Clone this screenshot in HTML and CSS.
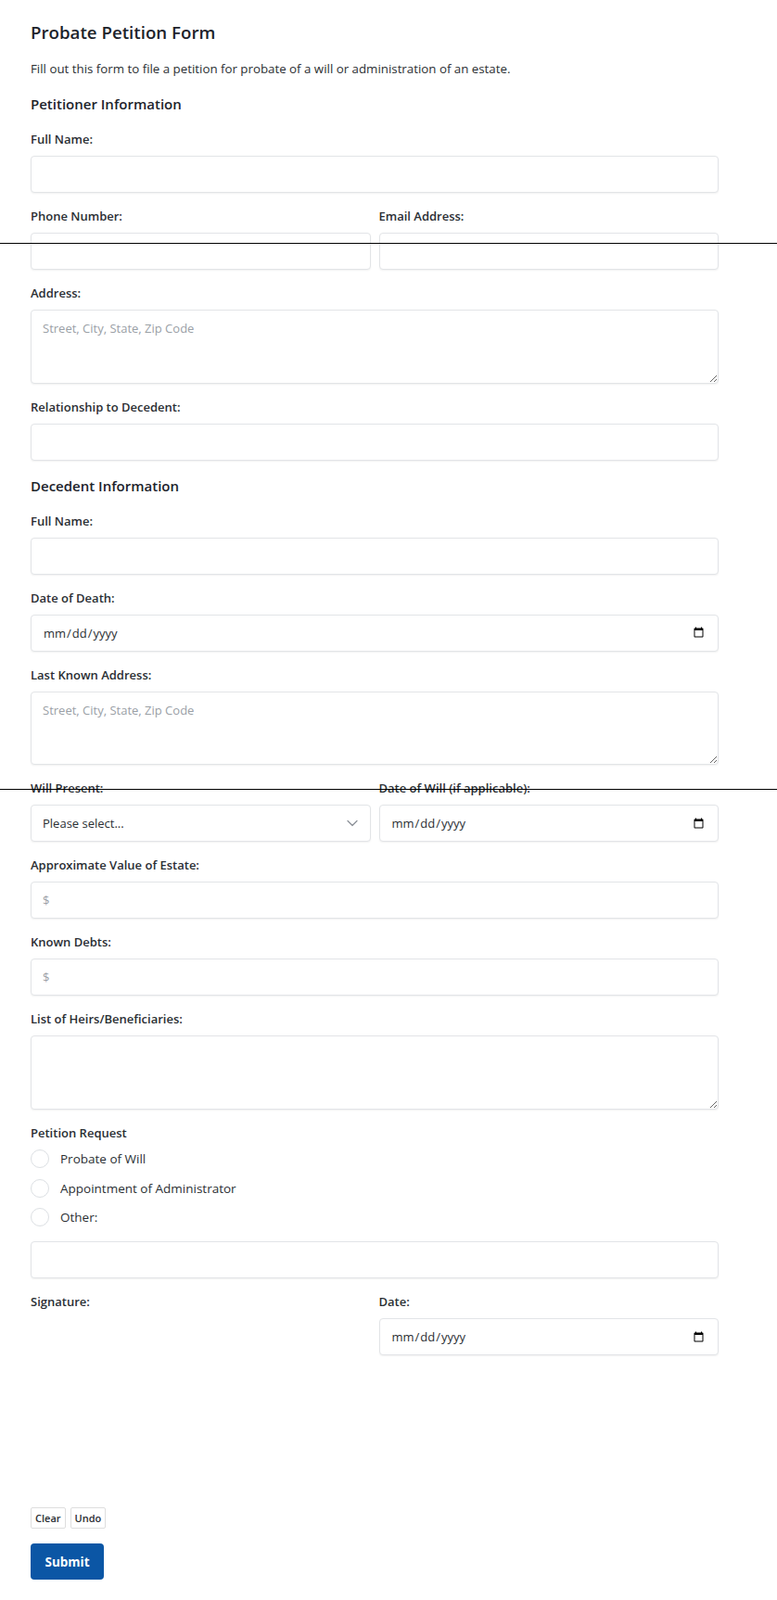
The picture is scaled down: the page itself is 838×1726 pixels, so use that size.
FILE: index.html
```html
<!DOCTYPE html>
<html lang="en">
<head>
<meta charset="UTF-8" />
<meta name="viewport" content="width=device-width, initial-scale=1.0" />
<title>Probate Petition Form</title>
<link rel="stylesheet" href="styles.css">
</head>
<body>

<div class="page">
<h1>Probate Petition Form</h1>
<p class="intro">Fill out this form to file a petition for probate of a will or administration of an estate.</p>

<form id="petitionForm">
<h2>Petitioner Information</h2>

<div class="field">
<label for="petName">Full Name:</label>
<input type="text" id="petName" class="ctrl" />
</div>

<div class="row">
<div class="field">
<label for="petPhone">Phone Number:</label>
<input type="tel" id="petPhone" class="ctrl" />
</div>
<div class="field">
<label for="petEmail">Email Address:</label>
<input type="email" id="petEmail" class="ctrl" />
</div>
</div>

<div class="field">
<label for="petAddress">Address:</label>
<textarea id="petAddress" class="ctrl area" placeholder="Street, City, State, Zip Code"></textarea>
</div>

<div class="field">
<label for="petRelation">Relationship to Decedent:</label>
<input type="text" id="petRelation" class="ctrl" />
</div>

<h2>Decedent Information</h2>

<div class="field">
<label for="decName">Full Name:</label>
<input type="text" id="decName" class="ctrl" />
</div>

<div class="field">
<label for="decDeath">Date of Death:</label>
<input type="date" id="decDeath" class="ctrl" />
</div>

<div class="field">
<label for="decAddress">Last Known Address:</label>
<textarea id="decAddress" class="ctrl area" placeholder="Street, City, State, Zip Code"></textarea>
</div>

<div class="row">
<div class="field">
<label for="willPresent">Will Present:</label>
<div class="select-wrap">
<select id="willPresent" class="ctrl">
<option>Please select...</option>
<option>Yes</option>
<option>No</option>
</select>
<svg class="chevron" width="12" height="8" viewBox="0 0 12 8"><path d="M1 1.5l5 5 5-5" fill="none" stroke="#8a8f96" stroke-width="1.2" stroke-linecap="round" stroke-linejoin="round"/></svg>
</div>
</div>
<div class="field">
<label for="willDate">Date of Will (if applicable):</label>
<input type="date" id="willDate" class="ctrl" />
</div>
</div>

<div class="field">
<label for="estateValue">Approximate Value of Estate:</label>
<input type="text" id="estateValue" class="ctrl" placeholder="$" />
</div>

<div class="field">
<label for="debts">Known Debts:</label>
<input type="text" id="debts" class="ctrl" placeholder="$" />
</div>

<div class="field">
<label for="heirs">List of Heirs/Beneficiaries:</label>
<textarea id="heirs" class="ctrl area"></textarea>
</div>

<div class="field">
<div class="group-label">Petition Request</div>
<div class="radios">
<label class="radio"><input type="radio" name="request" value="probate" /><span>Probate of Will</span></label>
<label class="radio"><input type="radio" name="request" value="admin" /><span>Appointment of Administrator</span></label>
<label class="radio"><input type="radio" name="request" value="other" /><span>Other:</span></label>
</div>
<input type="text" id="otherText" class="ctrl" />
</div>

<div class="row sign-row">
<div class="field">
<label>Signature:</label>
<div class="sign-pad"></div>
<div class="pad-btns">
<button type="button" class="small-btn">Clear</button>
<button type="button" class="small-btn">Undo</button>
</div>
</div>
<div class="field">
<label for="signDate">Date:</label>
<input type="date" id="signDate" class="ctrl" />
</div>
</div>

<button type="submit" class="submit-btn">Submit</button>
</form>
</div>

<div class="scan-line line-a"></div>
<div class="scan-line line-b"></div>

</body>
</html>
```

FILE: styles.css
```css
* { box-sizing: border-box; }

html, body {
margin: 0; padding: 0;
background: #ffffff;
font-family: "Open Sans", "Noto Sans", Arial, sans-serif;
color: #212529;
}

.page {
width: 742px;
margin-left: 33px;
padding: 23px 0 23px;
}

h1 {
margin: 0 0 17px; font-size: 18.7px; line-height: 24px;
font-weight: 600; color: #1d232b;
}

.intro {
margin: 0 0 15px; font-size: 13.3px; line-height: 21px;
color: #2b2f33;
}

h2 {
margin: 0 0 16px; font-size: 15px; line-height: 24px;
font-weight: 600; color: #1d232b;
}

.field { margin-bottom: 15px; }

.field label,
.group-label {
display: block;
font-size: 13px; line-height: 20px; font-weight: 600;
color: #2a2e33;
margin-bottom: 8px;
}

.row {
display: grid;
grid-template-columns: 1fr 1fr;
gap: 9px;
}

.ctrl {
display: block;
width: 100%; height: 40px;
padding: 0 12px;
font-family: inherit; font-size: 13px; color: #2b2f33;
background: #fff;
border: 1px solid #e2e4e7; border-radius: 4px;
box-shadow: 0 1px 2px rgba(0,0,0,0.06);
outline: none;
}

.ctrl::placeholder { color: #9aa0a6; }

.area {
height: 79.5px;
padding: 10px 12px;
resize: vertical;
}

.select-wrap { position: relative; }

.select-wrap select {
appearance: none; -webkit-appearance: none;
}

.chevron {
position: absolute;
right: 14px; top: 16px;
pointer-events: none;
}

/* radio list */
.group-label { margin-bottom: 3px; }

.radios { margin-bottom: 10px; }

.radio {
display: flex !important; align-items: center;
height: 31.5px; margin: 0 !important;
font-weight: 400 !important; font-size: 13.5px !important;
color: #2b2f33 !important;
}

.radio input {
appearance: none; -webkit-appearance: none;
width: 20px; height: 20px; margin: 0 12px 0 0;
border: 1px solid #dcdfe3; border-radius: 50%;
background: #fff;
}

/* signature */
.sign-pad {
height: 204px;
}

.pad-btns { display: flex; gap: 5px; }

.small-btn {
font-family: inherit; font-size: 11px; font-weight: 600;
color: #2a2e33;
background: #fff;
border: 1px solid #dedede; border-radius: 2px;
padding: 0 4px; height: 23px;
}

.sign-row { margin-bottom: 1px; }

.submit-btn {
display: block;
height: 39px; padding: 0 15.5px;
background: #0b56a5; color: #fff;
font-family: inherit; font-size: 13.5px; font-weight: 700;
border: none; border-radius: 4px;
cursor: pointer;
}

.scan-line {
position: absolute; left: 0;
width: 100%; height: 1px;
background: #000;
}
.line-a { top: 262px; }
.line-b { top: 851px; }
```
